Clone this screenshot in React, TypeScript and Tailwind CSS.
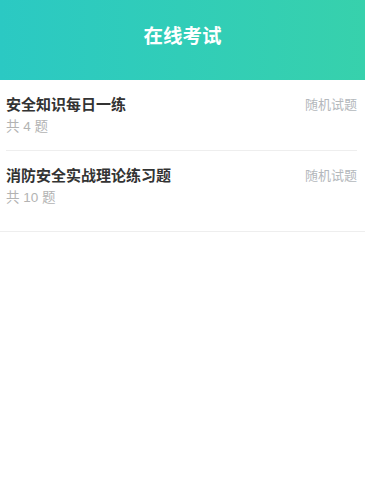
const exams = [
  { id: 1, title: '安全知识每日一练', count: 4 },
  { id: 2, title: '消防安全实战理论练习题', count: 10 },
];

export default function App() {
  return (
    <div className="min-h-[480px] bg-white font-['Liberation_Sans','Noto_Sans_CJK_SC',sans-serif]">
      {/* Header */}
      <header className="flex h-[80px] items-center justify-center bg-gradient-to-r from-[#2bc9c3] to-[#37d1ac] pb-[6px]">
        <h1 className="text-[19.5px] font-bold text-white">在线考试</h1>
      </header>

      {/* Exam list */}
      <div className="border-b border-[#eeeeee] pb-[10px]">
        {exams.map((exam, i) => (
          <div
            key={exam.id}
            className={`ml-[6px] mr-[8px] flex items-start justify-between py-[14px] ${
              i < exams.length - 1 ? 'border-b border-[#eeeeee]' : ''
            }`}
          >
            <div>
              <div className="text-[15px] font-bold leading-[21px] text-[#333333]">{exam.title}</div>
              <div className="mt-[2px] text-[13.5px] leading-[19px] text-[#b3b3b3]">共 {exam.count} 题</div>
            </div>
            <span className="text-[13px] leading-[21px] text-[#b4b8bc]">随机试题</span>
          </div>
        ))}
      </div>
    </div>
  );
}
